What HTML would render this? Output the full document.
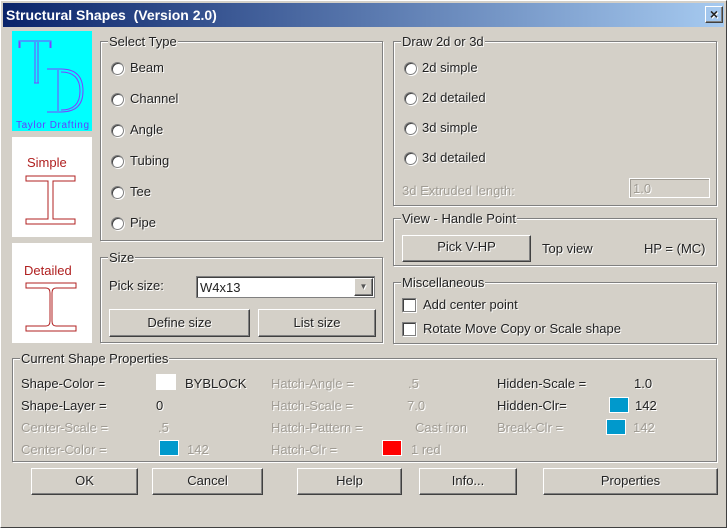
<!DOCTYPE html><html><head><style>
*{margin:0;padding:0;box-sizing:border-box}
body{width:727px;height:528px;background:#d4d0c8;position:relative;overflow:hidden;font-family:"Liberation Sans",sans-serif;font-size:13px;color:#222;border:1px solid #fff;border-right-color:#404040;border-bottom-color:#404040}
.a{position:absolute;white-space:nowrap}
.t{text-shadow:1px 1px 0 #fff}
.d{color:#a09c94;text-shadow:1px 1px 0 #fff}
.g{position:absolute;border:1px solid #808080;box-shadow:inset 1px 1px 0 #fff,1px 1px 0 #fff}
.gl{position:absolute;top:-8px;left:7px;background:#d4d0c8;padding:0 1px;text-shadow:1px 1px 0 #fff}
.r{position:absolute;width:13px;height:13px;border-radius:50%;background:#fff;border:1px solid #808080;box-shadow:inset 1px 1px 0 #404040,1px 1px 0 #fff}
.c{position:absolute;width:14px;height:14px;background:#fff;border:1px solid #808080;box-shadow:inset 1px 1px 0 #404040,1px 1px 0 #fff}
.b{position:absolute;border:1px solid #fff;border-right-color:#404040;border-bottom-color:#404040;box-shadow:inset -1px -1px 0 #808080;text-align:center;text-shadow:1px 1px 0 #fff}
.sw{position:absolute;width:20px;height:16px;border:1px solid #fff}
</style></head><body>
<div class="a" style="left:2px;top:2px;width:721px;height:24px;background:linear-gradient(90deg,#0a246a,#a6caf0)"></div>
<div class="a" style="left:5px;top:6px;color:#fff;font-weight:bold;font-size:14px">Structural Shapes&nbsp; (Version 2.0)</div>
<div class="b" style="left:704px;top:5px;width:18px;height:17px;line-height:14px;font-weight:bold;font-size:14px">×</div>

<div class="a" style="left:11px;top:30px;width:80px;height:100px;background:#00ffff">
<svg width="80" height="100"><g fill="none" stroke="#8040ff" stroke-width="1"><path d="M7 17V10H39V17M8 17V11M38 17V11"/><path d="M23 11V52M26 11V52M22 52H27"/><path d="M35 38H49Q71 38 71 60Q71 81 49 81H35M46 39V80M49 41Q68 41 68 60Q68 79 49 79"/></g><text x="4" y="97" font-size="10" fill="#6040ff" font-family="Liberation Sans" textLength="73" lengthAdjust="spacing">Taylor Drafting</text></svg></div>
<div class="a" style="left:11px;top:136px;width:80px;height:100px;background:#fff">
<svg width="80" height="100"><text x="15" y="30" font-size="13" fill="#b02020" font-family="Liberation Sans">Simple</text><path d="M14 39H63V44H41V82H63V87H14V82H36V44H14Z" fill="none" stroke="#b02020"/></svg></div>
<div class="a" style="left:11px;top:242px;width:80px;height:100px;background:#fff">
<svg width="80" height="100"><text x="12" y="32" font-size="13" fill="#b02020" font-family="Liberation Sans">Detailed</text><path d="M14 40H64V45H44Q40 45 40 50V78Q40 83 44 83H64V88H14V83H34Q38 83 38 78V50Q38 45 34 45H14Z" fill="none" stroke="#b02020"/></svg></div>

<div class="g" style="left:99px;top:40px;width:283px;height:200px"><span class="gl">Select Type</span></div>
<div class="r" style="left:110px;top:61px"></div><div class="a t" style="left:129px;top:59px">Beam</div>
<div class="r" style="left:110px;top:92px"></div><div class="a t" style="left:129px;top:90px">Channel</div>
<div class="r" style="left:110px;top:123px"></div><div class="a t" style="left:129px;top:121px">Angle</div>
<div class="r" style="left:110px;top:154px"></div><div class="a t" style="left:129px;top:152px">Tubing</div>
<div class="r" style="left:110px;top:185px"></div><div class="a t" style="left:129px;top:183px">Tee</div>
<div class="r" style="left:110px;top:216px"></div><div class="a t" style="left:129px;top:214px">Pipe</div>

<div class="g" style="left:99px;top:256px;width:283px;height:86px"><span class="gl">Size</span></div>
<div class="a t" style="left:108px;top:277px">Pick size:</div>
<div class="a" style="left:195px;top:275px;width:179px;height:22px;background:#fff;border:1px solid #808080;box-shadow:inset 1px 1px 0 #404040"></div>
<div class="a t" style="left:199px;top:279px">W4x13</div>
<div class="b" style="left:353px;top:277px;width:19px;height:18px;background:#d4d0c8;font-size:8px;line-height:16px;color:#555">▼</div>
<div class="b" style="left:108px;top:308px;width:141px;height:28px;line-height:25px">Define size</div>
<div class="b" style="left:257px;top:308px;width:118px;height:28px;line-height:25px">List size</div>

<div class="g" style="left:392px;top:40px;width:324px;height:165px"><span class="gl">Draw 2d or 3d</span></div>
<div class="r" style="left:403px;top:61px"></div><div class="a t" style="left:421px;top:59px">2d simple</div>
<div class="r" style="left:403px;top:91px"></div><div class="a t" style="left:421px;top:89px">2d detailed</div>
<div class="r" style="left:403px;top:121px"></div><div class="a t" style="left:421px;top:119px">3d simple</div>
<div class="r" style="left:403px;top:151px"></div><div class="a t" style="left:421px;top:149px">3d detailed</div>
<div class="a d" style="left:401px;top:182px">3d Extruded length:</div>
<div class="a" style="left:628px;top:177px;width:81px;height:20px;border:1px solid #fff;box-shadow:inset 1px 1px 0 #a09c94"></div>
<div class="a d" style="left:632px;top:180px">1.0</div>

<div class="g" style="left:392px;top:217px;width:324px;height:48px"><span class="gl">View - Handle Point</span></div>
<div class="b" style="left:401px;top:234px;width:129px;height:27px;line-height:21px">Pick V-HP</div>
<div class="a t" style="left:541px;top:240px">Top view</div>
<div class="a t" style="left:643px;top:240px">HP = (MC)</div>

<div class="g" style="left:392px;top:281px;width:324px;height:62px"><span class="gl">Miscellaneous</span></div>
<div class="c" style="left:401px;top:297px"></div><div class="a t" style="left:422px;top:296px">Add center point</div>
<div class="c" style="left:401px;top:321px"></div><div class="a t" style="left:422px;top:320px">Rotate Move Copy or Scale shape</div>

<div class="g" style="left:11px;top:357px;width:705px;height:104px"><span class="gl">Current Shape Properties</span></div>
<div class="a t" style="left:20px;top:375px">Shape-Color =</div>
<div class="sw" style="left:155px;top:373px;background:#fff"></div>
<div class="a t" style="left:184px;top:375px">BYBLOCK</div>
<div class="a d" style="left:270px;top:375px">Hatch-Angle =</div>
<div class="a d" style="left:407px;top:375px">.5</div>
<div class="a t" style="left:496px;top:375px">Hidden-Scale =</div>
<div class="a t" style="left:633px;top:375px">1.0</div>

<div class="a t" style="left:20px;top:397px">Shape-Layer =</div>
<div class="a t" style="left:155px;top:397px">0</div>
<div class="a d" style="left:270px;top:397px">Hatch-Scale =</div>
<div class="a d" style="left:406px;top:397px">7.0</div>
<div class="a t" style="left:496px;top:397px">Hidden-Clr=</div>
<div class="sw" style="left:608px;top:396px;background:#0099cc"></div>
<div class="a t" style="left:634px;top:397px">142</div>

<div class="a d" style="left:20px;top:419px">Center-Scale =</div>
<div class="a d" style="left:157px;top:419px">.5</div>
<div class="a d" style="left:270px;top:419px">Hatch-Pattern =</div>
<div class="a d" style="left:414px;top:419px">Cast iron</div>
<div class="a d" style="left:496px;top:419px">Break-Clr =</div>
<div class="sw" style="left:605px;top:418px;background:#0099cc"></div>
<div class="a d" style="left:632px;top:419px">142</div>

<div class="a d" style="left:20px;top:441px">Center-Color =</div>
<div class="sw" style="left:158px;top:439px;background:#0099cc"></div>
<div class="a d" style="left:186px;top:441px">142</div>
<div class="a d" style="left:270px;top:441px">Hatch-Clr =</div>
<div class="sw" style="left:381px;top:439px;background:#ff0000"></div>
<div class="a d" style="left:410px;top:441px">1 red</div>

<div class="b" style="left:30px;top:467px;width:107px;height:27px;line-height:24px">OK</div>
<div class="b" style="left:151px;top:467px;width:111px;height:27px;line-height:24px">Cancel</div>
<div class="b" style="left:296px;top:467px;width:105px;height:27px;line-height:24px">Help</div>
<div class="b" style="left:418px;top:467px;width:98px;height:27px;line-height:24px">Info...</div>
<div class="b" style="left:542px;top:467px;width:175px;height:27px;line-height:24px">Properties</div>
</body></html>
